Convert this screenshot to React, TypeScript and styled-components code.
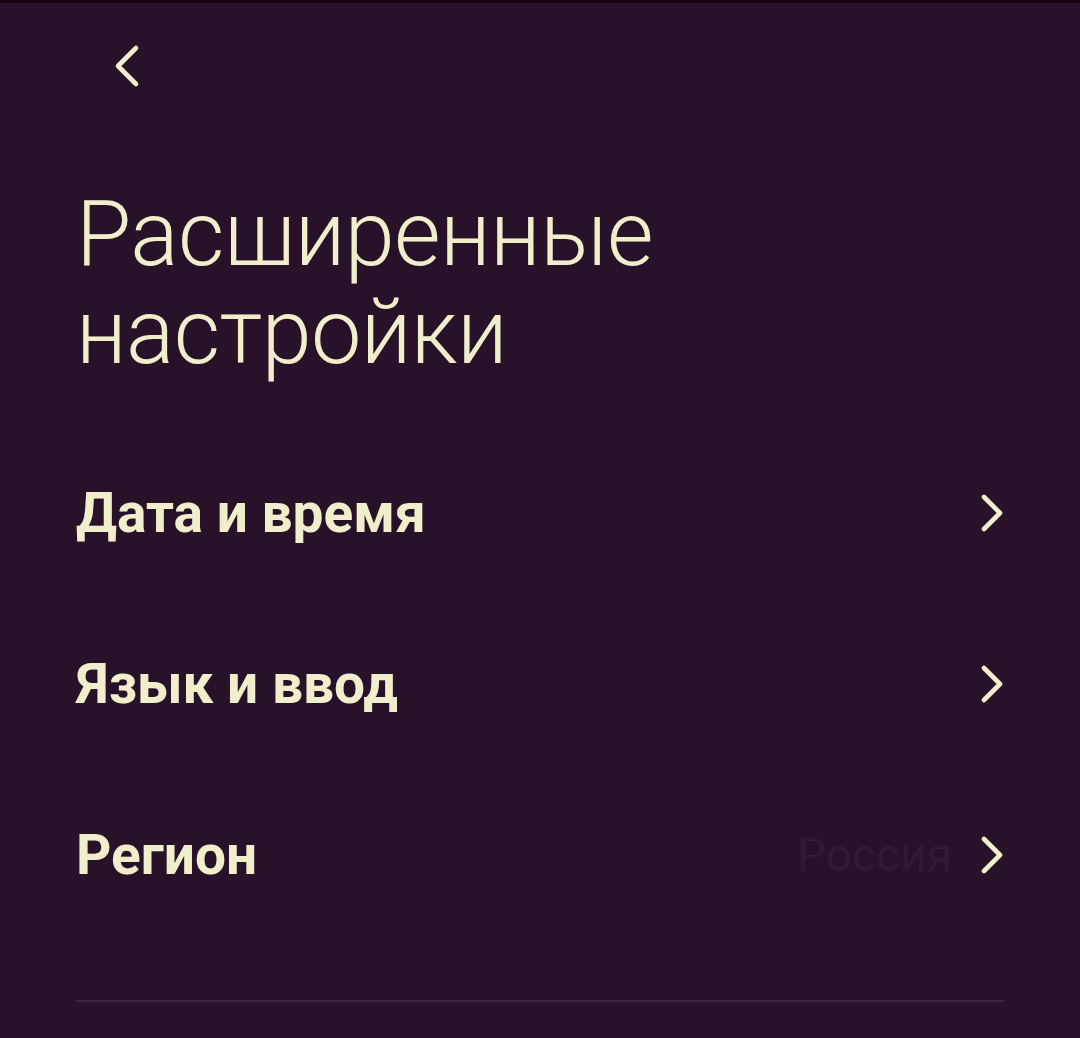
import React from "react";
import styled, { createGlobalStyle } from "styled-components";

const GlobalStyle = createGlobalStyle`
  html, body {
    margin: 0;
    padding: 0;
    background: #27122a;
  }
  body {
    font-family: Roboto, "Noto Sans", "Liberation Sans", sans-serif;
  }
`;

const Screen = styled.div`
  width: 1080px;
  height: 1038px;
  box-sizing: border-box;
  background: #27122a;
  border-top: 3px solid #14060f;
  color: #f1efcb;
  display: flex;
  flex-direction: column;
  padding: 0 76px;
  overflow: hidden;
`;

const TopBar = styled.div`
  height: 130px;
  display: flex;
  align-items: center;
  padding-left: 35px;
  margin-top: -3px;
`;

const BackButton = styled.button`
  background: none;
  border: none;
  padding: 0;
  margin-top: 2px;
  display: flex;
  color: inherit;
  cursor: pointer;
`;

const Title = styled.h1`
  margin: 56px 0 0;
  font-weight: 300;
  font-size: 90px;
  line-height: 98px;
  letter-spacing: -0.6px;
  color: #f1efcb;
`;

const List = styled.div`
  display: flex;
  flex-direction: column;
  margin-top: 45px;
`;

const Row = styled.div`
  height: 171px;
  display: flex;
  align-items: center;
  justify-content: space-between;
`;

const Label = styled.span`
  font-weight: 700;
  font-size: 55px;
  color: #f1efcb;
`;

const Right = styled.div`
  display: flex;
  align-items: center;
  gap: 28px;
`;

const Value = styled.span`
  font-weight: 400;
  font-size: 46px;
  color: #301b33;
`;

const Divider = styled.div`
  height: 2px;
  background: #3a283d;
  margin-top: 60px;
`;

const Chevron = ({ dir }: { dir: "left" | "right" }) =>
  dir === "left" ? (
    <svg width="32" height="44" viewBox="0 0 32 44" fill="none">
      <path d="M25 4 L7 22 L25 40" stroke="#f1efcb" strokeWidth="4.6" strokeLinecap="round" strokeLinejoin="round" />
    </svg>
  ) : (
    <svg width="24" height="38" viewBox="0 0 24 38" fill="none">
      <path d="M4 3 L20 19 L4 35" stroke="#f1efcb" strokeWidth="4.6" strokeLinecap="round" strokeLinejoin="round" />
    </svg>
  );

const items: { label: string; value?: string }[] = [
  { label: "Дата и время" },
  { label: "Язык и ввод" },
  { label: "Регион", value: "Россия" },
];

export default function App() {
  return (
    <>
      <GlobalStyle />
      <Screen>
        <TopBar>
          <BackButton aria-label="Назад">
            <Chevron dir="left" />
          </BackButton>
        </TopBar>
        <Title>
          Расширенные
          <br />
          настройки
        </Title>
        <List>
          {items.map((it) => (
            <Row key={it.label}>
              <Label>{it.label}</Label>
              <Right>
                {it.value && <Value>{it.value}</Value>}
                <Chevron dir="right" />
              </Right>
            </Row>
          ))}
        </List>
        <Divider />
      </Screen>
    </>
  );
}
